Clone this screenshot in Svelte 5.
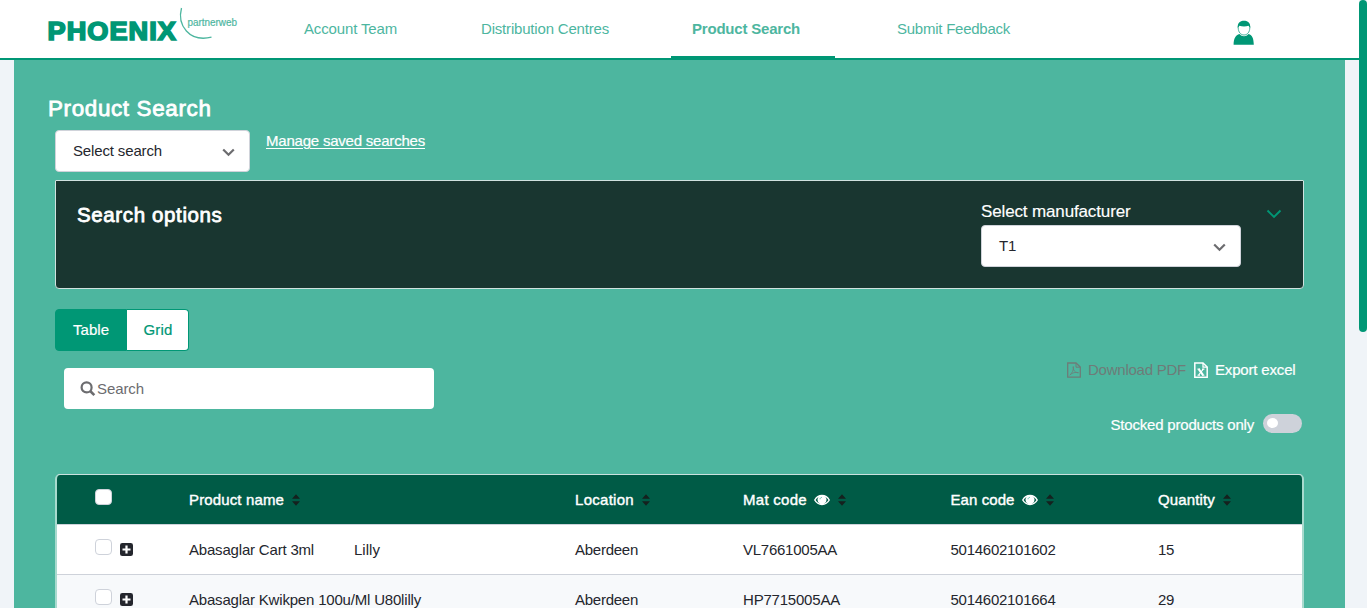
<script>
  const nav = [
    { label: 'Account Team', width: 93, cls: 'n1' },
    { label: 'Distribution Centres', width: 128, cls: 'n2' },
    { label: 'Product Search', width: 108, cls: 'n3', active: true },
    { label: 'Submit Feedback', width: 113, cls: 'n4' }
  ];
  const columns = [
    { label: 'Product name', w: 95 },
    { label: 'Location', w: 59 },
    { label: 'Mat code', w: 64, eye: true },
    { label: 'Ean code', w: 64, eye: true },
    { label: 'Quantity', w: 57 }
  ];
  const rows = [
    [['Abasaglar Cart 3ml', 125, 'Lilly', 26], ['Aberdeen', 63], ['VL7661005AA', 94], ['5014602101602', 105], ['15', 16]],
    [['Abasaglar Kwikpen 100u/Ml U80lilly', 232], ['Aberdeen', 63], ['HP7715005AA', 97], ['5014602101664', 105], ['29', 16]]
  ];

  // Spreads the letters of a label over its nominal width.
  function fit(node, width) {
    node.style.letterSpacing = '0';
    const natural = node.getBoundingClientRect().width;
    const n = node.textContent.length;
    node.style.letterSpacing = (width - natural) / n + 'px';
  }
</script>

{#snippet chevron()}
  <svg class="chev" width="13" height="9" viewBox="0 0 13 9"><path d="M1.200 1.500 6.500 6.800 11.800 1.500" fill="none" stroke="currentColor" stroke-width="2.200" /></svg>
{/snippet}

<div class="page">
  <header>
    <svg class="logo" width="194" height="36" viewBox="0 0 194 36">
      <text class="brand" x="1.500" y="33.500" textLength="129.500" lengthAdjust="spacingAndGlyphs">PHOENIX</text>
      <path d="M135.500 2C131 19 143 36.500 165.500 31.200" fill="none" stroke="#4db69f" stroke-width="1.300" />
      <text class="sub" x="141.500" y="20" textLength="49.500" lengthAdjust="spacingAndGlyphs">partnerweb</text>
    </svg>
    <nav>
      {#each nav as n}
        <a class={n.cls} class:active={n.active}><span use:fit={n.width}>{n.label}</span></a>
      {/each}
    </nav>
    <svg class="user" width="22" height="26" viewBox="0 0 22 26">
      <path d="M.6 24.700C.8 18.500 2.500 15 6.500 14 9 17 13 17 15.500 14 19.500 15 20.500 18.500 20.800 24.700Z" fill="#009775" />
      <path d="M5.200 7.500C5.200 12.500 8 15 11 15S16.800 12.500 16.800 7.500C16.800 3.500 14.300 1.500 11 1.500S5.200 3.500 5.200 7.500Z" fill="#fff" stroke="#4db69f" stroke-width="1" />
      <path d="M4.800 8C4.300 3.300 7 .8 11 .8S17.700 3.300 17.200 8L15.500 5.800C13 6.800 9 6.800 6.500 5.800Z" fill="#009775" />
    </svg>
  </header>

  <main>
    <h1><span use:fit={163.500}>Product Search</span></h1>
    <div class="saved">
      <div class="select s1"><span use:fit={89}>Select search</span>{@render chevron()}</div>
      <a class="manage"><span use:fit={159}>Manage saved searches</span></a>
    </div>

    <section class="options">
      <h2><span use:fit={145.500}>Search options</span></h2>
      <div class="manu">
        <label><span use:fit={149.500}>Select manufacturer</span></label>
        <div class="select s2"><span use:fit={17}>T1</span>{@render chevron()}</div>
      </div>
      <svg class="toggle" width="16" height="10" viewBox="0 0 16 10"><path d="M1.500 1.500 8 8 14.500 1.500" fill="none" stroke="#009775" stroke-width="1.900" /></svg>
    </section>

    <div class="views">
      <button class="on"><span use:fit={36}>Table</span></button><button class="off"><span use:fit={29}>Grid</span></button>
    </div>

    <div class="tools">
      <div class="search">
        <svg width="16" height="16" viewBox="0 0 16 16"><circle cx="6.600" cy="6.400" r="5" fill="none" stroke="#6c6c6f" stroke-width="2.200" /><path d="m10.200 10 4.100 4.100" stroke="#6c6c6f" stroke-width="2.600" /></svg>
        <span use:fit={47}>Search</span>
      </div>
      <div class="right">
        <div class="exports">
          <svg width="14" height="16" viewBox="0 0 14 16" fill="none" stroke="#6e7c78"><path d="M.7 1H9L13.300 5V15.200H.7Z" stroke-width="1.300" /><path d="M9 1V5.200H13" stroke-width="1" /><path d="M2.800 13C5 11.500 7 7.500 6.300 4.500 5.800 8 8 11 11.500 10.700 8.500 10 5.500 10.500 2.800 13" stroke-width=".8" /></svg>
          <span class="pdf" use:fit={98}>Download PDF</span>
          <svg class="xl" width="14" height="16" viewBox="0 0 14 16" fill="none" stroke="#fff"><path d="M.8 1H9L13.200 5V15.200H.8Z" stroke-width="1.500" /><path d="M9 1V5.200H13" stroke-width="1.300" /><path d="m4.700 7.200 4.400 6" stroke-width="2.100" /><path d="M9.300 7.200l-4.800 6M3.500 7.100h2.500M8 7.100h2.400M3.500 13.200h2.500M8 13.200h2.400" stroke-width="1.100" /></svg>
          <span class="excel" use:fit={80.500}>Export excel</span>
        </div>
        <div class="stock"><span use:fit={143.500}>Stocked products only</span><i></i></div>
      </div>
    </div>

    <div class="table">
      <div class="row head">
        <div class="check"><b></b></div>
        {#each columns as c}
          <div class="cell"><span use:fit={c.w}>{c.label}</span>
            {#if c.eye}<svg class="eye" width="16" height="12" viewBox="0 0 16 12"><path d="M.8 6C4 .1 12 .1 15.200 6 12 11.900 4 11.900.8 6Z" fill="none" stroke="#fff" stroke-width="1.500" /><circle cx="8" cy="5.700" r="4.500" fill="#fff" /><path d="M6 5.300C6 4.200 6.800 3.400 8 3.400" fill="none" stroke="#4db69f" stroke-width=".8" /></svg>{/if}
            <svg class="sort" width="8" height="12" viewBox="0 0 8 12"><path d="M0 4.700 4 .3 8 4.700ZM0 7.300 4 11.700 8 7.300Z" fill="#15211e" /></svg>
          </div>
        {/each}
      </div>
      {#each rows as r}
        <div class="row">
          <div class="check"><b></b><svg width="13" height="13" viewBox="0 0 13 13"><rect width="13" height="13" rx="2.300" fill="#24262d" /><path d="M6.500 2.500v8M2.500 6.500h8" stroke="#fff" stroke-width="2.200" /></svg></div>
          {#each r as c}
            <div class="cell"><span use:fit={c[1]}>{c[0]}</span>{#if c[2]}<span class="brandname" use:fit={c[3]}>{c[2]}</span>{/if}</div>
          {/each}
        </div>
      {/each}
    </div>
  </main>
  <div class="scroll"></div>
</div>

<style>
  :global(body) { margin: 0; overflow: hidden; }
  .page { position: relative; box-sizing: border-box; width: 1367px; height: 608px; overflow: hidden; background: #f0f4f8; font: 15px/20px "Liberation Sans", Arial, sans-serif; color: #24262d; padding-right: 8px; }
  .page * { box-sizing: border-box; }
  span { white-space: pre; display: inline-block; }
  header { height: 60px; background: #fff; border-bottom: 2px solid #009775; display: flex; align-items: flex-start; }
  .logo { margin: 6px 0 0 46px; flex: none; overflow: visible; }
  .brand { font: 700 25.5px "Liberation Sans", Arial, sans-serif; letter-spacing: 1px; fill: #009775; stroke: #009775; stroke-width: 1.7px; }
  .sub { font: 10.5px "Liberation Sans", Arial, sans-serif; fill: #4db69f; stroke: #4db69f; stroke-width: .2px; }
  nav { display: flex; height: 58px; margin-left: 64px; color: #4db69f; }
  nav a { height: 58px; padding-top: 19px; }
  .n2 { margin-left: 84px; }
  .n3 { margin-left: 62px; width: 164px; padding-left: 21px; font-weight: 700; border-bottom: 2px solid #009775; }
  .n4 { margin-left: 62px; }
  .user { margin: 20px 0 0 223px; }
  main { margin: 0 14px; height: 548px; background: #4db69f; padding: 35px 41px 0; overflow: hidden; }
  h1, h2 { margin: 0; color: #fff; font-weight: 400; -webkit-text-stroke: .8px #fff; }
  h1 { font-size: 22.4px; line-height: 27px; height: 35px; margin-left: -7px; }
  .saved { display: flex; height: 50px; }
  .select { display: flex; align-items: center; justify-content: space-between; height: 42px; background: #fff; border: 1px solid #d0d3da; border-radius: 4px; padding: 0 14px 0 17px; }
  .s1 { width: 195px; }
  .chev { color: #6c6c6f; margin-top: 3px; }
  .manage { color: #fff; margin: 1px 0 0 16px; }
  .manage span { text-decoration: underline; text-underline-offset: 2px; text-decoration-thickness: 1px; -webkit-text-stroke: .2px #fff; }
  .options { display: flex; width: 1249px; height: 109px; background: #193630; border: 1px solid #d0e2df; border-radius: 1px 1px 4px 4px; }
  h2 { font-size: 20.5px; line-height: 26px; margin: 21px 0 0 21px; width: 904px; }
  .manu { width: 260px; margin-top: 20px; color: #fff; -webkit-text-stroke: .15px #fff; }
  .manu label { display: block; height: 24px; font-size: 17px; line-height: 21px; }
  .s2 { color: #24262d; -webkit-text-stroke: 0; }
  .toggle { margin: 28px 0 0 25px; }
  .views { display: flex; margin-top: 20px; height: 42px; }
  button { border: 1px solid #009775; font: inherit; padding: 0; text-align: center; }
  .on { width: 72px; background: #009775; color: #fff; border-radius: 4px 0 0 4px; -webkit-text-stroke: .2px #fff; }
  .off { width: 62px; border-left: 0; padding-left: 1px; background: #fff; color: #009775; border-radius: 0 4px 4px 0; -webkit-text-stroke: .2px #009775; }
  .tools { display: flex; justify-content: space-between; height: 123px; width: 1249px; }
  .search { display: flex; align-items: center; margin: 17px 0 0 9px; width: 370px; height: 41px; background: #fff; border-radius: 4px; padding-left: 16px; color: #6c6c6f; }
  .search span { margin-left: 1px; }
  .right { display: flex; flex-direction: column; align-items: flex-end; padding-top: 9px; color: #fff; -webkit-text-stroke: .2px currentColor; }
  .exports { display: flex; align-items: center; height: 20px; margin-right: 8.5px; }
  .pdf { color: #6e7c78; margin-left: 7px; -webkit-text-stroke: 0; }
  .xl { margin-left: 8px; }
  .excel { margin-left: 7px; }
  .exports svg, .stock i { flex: none; }
  .stock { display: flex; align-items: center; margin: 35px 2px 0 0; height: 20px; }
  .stock i { width: 39px; height: 19px; border-radius: 10px; background: #ced2da; margin-left: 9px; padding: 4px; margin-top: -3px; }
  .stock i::before { content: ""; display: block; width: 11px; height: 10px; border-radius: 50%; background: #fff; }
  .table { width: 1249px; height: 160px; border: 1px solid #cbe1df; border-left: 2px solid #a8dace; border-right: 2px solid #a8dace; border-radius: 5px; overflow: hidden; background: #fff; }
  .row { display: grid; grid-template-columns: 132px 386px 168px 207.5px 207.5px 144px; height: 50px; border-bottom: 1px solid #ced2da; align-items: center; }
  .row:nth-child(3) { background: #f7f9fb; }
  .head { background: #005b46; color: #fff; }
  .head span { -webkit-text-stroke: .4px #fff; }
  .cell { display: flex; align-items: center; height: 20px; }
  .brandname { margin-left: 40px; }
  .sort { margin-left: 8px; }
  .eye { margin-left: 7px; }
  .check { display: flex; align-items: center; padding-left: 38px; }
  .check b { width: 17px; height: 16px; background: #fff; border: 1px solid #ced2da; border-radius: 4px; margin-top: -5px; }
  .check svg { margin-left: 8px; }
  .scroll { position: absolute; right: 0; top: 0; width: 8px; height: 332px; border-radius: 4px; background: #009775; }
</style>
